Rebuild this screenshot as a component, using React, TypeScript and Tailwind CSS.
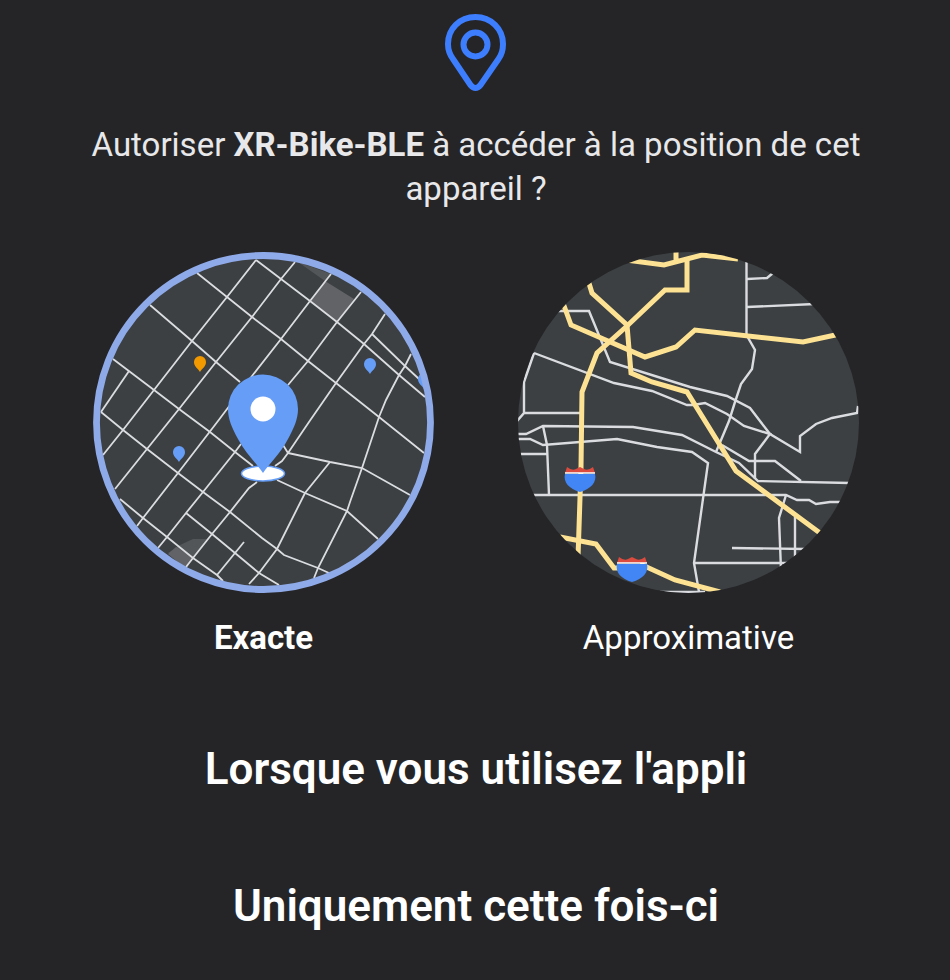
const streets = [
  'M197 273L227 297L252 317L281 339L308 361L336 383L379 417L424 453',
  'M150 305L192 341L216 362L240 382M283 445L288 453',
  'M113 359L154 390L179 409L210 432L235 452L253 466M277 480L305 493L347 511L378 539',
  'M101 412L123 430L147 449L178 473L203 492L230 512L262 538L277 549L284 555L318 568L329 573',
  'M186 513L212 534L235 553L259 573L279 585',
  'M120 499L143 518L167 537L193 558L217 575L223 581',
  'M256 260L281 279L310 301L337 322L364 344L399 375L425 397',
  'M372 334L405 366L419 379',
  'M256 260L227 297L192 341L154 390L123 430L103 455',
  'M295 262L281 279L252 317L216 362L179 409L147 449L115 489',
  'M331 274L310 301L281 339L252 376L218 421L178 473L143 518L137 526',
  'M361 292L337 322L308 361L288 385M241 444L235 452L203 492L186 513L167 537L158 548',
  'M385 314L372 334L364 344L336 383L309 422L288 453L282 461L275 466M257 482L249 488L230 512L212 534L193 558L186 567',
  'M244 542L235 553L217 575',
  'M411 354L405 366L399 375L386 400L379 417L362 468L350 502L347 511L318 568L314 578',
  'M330 462L305 493L277 549L259 573L249 584',
  'M288 453L330 462L362 468L410 495',
  'M129 371L101 412',
];

const roads = [
  'M556 311H589L610 362L690 387L727 396L750 408L770 434L800 452V436L816 424L832 418L857 413L858 406',
  'M534 353L614 383L652 391L687 405H693L705 403L727 414L744 426L770 434L755 454V479',
  'M534 353L524 382V413L517 421M524 413H580',
  'M746.500 258V335L755 350L752 369L741 384L735 402L729 421L716 452',
  'M747 279L767 278L773 273M747 307L815 304',
  'M516 434H526L543 426L633 427L682 435L716 452L739 463L758 481L850 483',
  'M516 439H530L543 445L617 439L657 447L692 452L708 463L694 563L699 592',
  'M543 426L547 445L549 495M516 454H547',
  'M530 495H786L797 500H809L816 504L830 502H842',
  'M786 495L779 518L781 570M795 517V560',
  'M732 548L806 549M694 563H792',
  'M722 445L749 461H775L801 481M660 592H705',
];

const highways = [
  'M626 260L664 265L702 255L738 259M676 250V262',
  'M687 259V290H665L627 326L597 353L582 392L581 468L578 558',
  'M588 280L592 293L627 325L631 373L652 382L687 392L736 471L824 536',
  'M563 303L571 325L645 357L676 347L695 330L803 342L840 334',
  'M560 537L596 544L614 568H622M640 564L675 580L720 592',
];

function SmallPin({ x, y, color }: { x: number; y: number; color: string }) {
  return (
    <path
      transform={`translate(${x} ${y})`}
      fill={color}
      d="M0 9C-2 5-6 4-6-1A6 6 0 0 1 6-1C6 4 2 5 0 9Z"
    />
  );
}

function Shield({ x, y }: { x: number; y: number }) {
  return (
    <g transform={`translate(${x} ${y})`}>
      <path fill="#4285f4" d="M-15 7H15C17 15 11 22 0 25C-11 22-17 15-15 7Z" />
      <path fill="#dc4b3e" d="M-15 6L-13 0Q-8 4-4 2L0 0L4 2Q8 4 13 0L15 6Z" />
      <path stroke="#fff" strokeWidth="1.600" d="M-15 6H15" />
    </g>
  );
}

function ExactMap() {
  return (
    <svg viewBox="93 252 341 341" className="size-[341px] max-w-full" aria-hidden="true">
      <clipPath id="exact-clip">
        <circle cx="263.500" cy="422.500" r="168" />
      </clipPath>
      <circle cx="263.500" cy="422.500" r="168" fill="#3c4043" />
      <g clipPath="url(#exact-clip)">
        <path fill="#535659" d="M298 262L331 274L325 281ZM168 553L180 545L193 539H208L193 558Z" />
        <path fill="#626366" d="M325 281L354 299L337 322L310 301ZM168 554L176 547L193 558L186 569Z" />
        <g fill="none" stroke="#dadce0" strokeWidth="1.800">
          {streets.map((d) => (
            <path key={d} d={d} />
          ))}
        </g>
        <SmallPin x={200} y={363} color="#f29900" />
        <SmallPin x={370} y={365} color="#669df6" />
        <SmallPin x={179} y={453} color="#669df6" />
        <SmallPin x={424} y={380} color="#669df6" />
      </g>
      <ellipse cx="263" cy="473.500" rx="21.500" ry="7.500" fill="#fff" stroke="#669df6" strokeWidth="1.500" />
      <path
        fill="#669df6"
        d="M263 473C257 464 246 454 238 439C232 428 228 419 228 409A35 34.500 0 0 1 298 409C298 419 294 428 288 439C280 454 269 464 263 473Z"
      />
      <circle cx="263" cy="409" r="12.500" fill="#fff" />
      <circle cx="263.500" cy="422.500" r="167" fill="none" stroke="#8faae8" strokeWidth="6.800" />
    </svg>
  );
}

function ApproximateMap() {
  return (
    <svg viewBox="518 252 341 341" className="size-[341px] max-w-full" aria-hidden="true">
      <clipPath id="approx-clip">
        <circle cx="688.500" cy="422.500" r="170.500" />
      </clipPath>
      <g clipPath="url(#approx-clip)">
        <rect x="518" y="252" width="341" height="341" fill="#3c4043" />
        <g fill="none" stroke="#dadce0" strokeWidth="2.400">
          {roads.map((d) => (
            <path key={d} d={d} />
          ))}
        </g>
        <g fill="none" stroke="#fde293" strokeWidth="5">
          {highways.map((d) => (
            <path key={d} d={d} />
          ))}
        </g>
        <Shield x={580} y={467} />
        <Shield x={632} y={557} />
      </g>
    </svg>
  );
}

export default function App() {
  return (
    <main className="min-h-screen bg-[#252527] pt-3 pb-8 pl-0.5 font-['Roboto',sans-serif] text-white">
      <svg
        viewBox="1 0 64 80"
        className="mx-auto h-20 w-16"
        fill="none"
        stroke="#3d7eff"
        strokeWidth="6"
        strokeLinejoin="round"
        aria-hidden="true"
      >
        <path d="M32.500 5C16.500 5 5 17 5 32C5 38 7 43 10 47L27.500 73Q32.500 79 37.500 73L55.500 47C58.500 43 60 38 60 32C60 17 48 5 32.500 5Z" />
        <circle cx="32.500" cy="32.500" r="12" />
      </svg>

      <h1 className="mx-auto mt-[31px] max-w-[850px] px-6 text-center text-[33px] leading-[44px] font-normal text-[#e8e8ea]">
        Autoriser <strong className="font-bold">XR-Bike-BLE</strong> à accéder à la position de cet appareil ?
      </h1>

      <fieldset className="mx-auto mt-[41px] grid max-w-[850px] grid-cols-2">
        <label className="flex cursor-pointer flex-col items-center">
          <ExactMap />
          <input type="radio" name="precision" defaultChecked className="size-0 appearance-none" />
          <span className="mt-[25px] text-[33px] leading-10 font-bold">Exacte</span>
        </label>
        <label className="flex cursor-pointer flex-col items-center">
          <ApproximateMap />
          <input type="radio" name="precision" className="size-0 appearance-none" />
          <span className="mt-[25px] text-[33px] leading-10">Approximative</span>
        </label>
      </fieldset>

      <div className="mt-[71px] flex flex-col items-center gap-[57px] text-[44px] leading-[80px] font-semibold">
        <button type="button" className="cursor-pointer px-6">
          Lorsque vous utilisez l'appli
        </button>
        <button type="button" className="cursor-pointer px-6">
          Uniquement cette fois-ci
        </button>
      </div>
    </main>
  );
}
